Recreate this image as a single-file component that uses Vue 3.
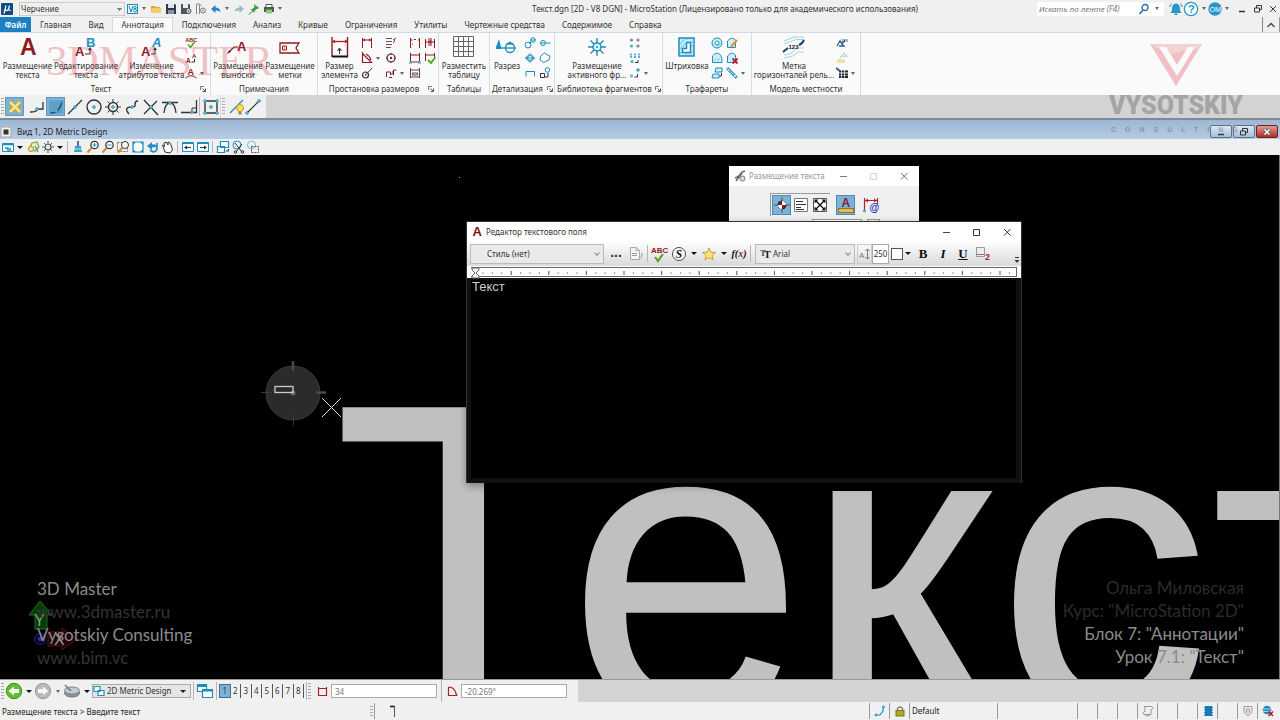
<script setup>
import { h, ref } from 'vue'

const R = '#8e1b22'
const B = '#1c8dbd'
const K = '#333'
const line = (d, c = K, w = 1, f = 'none') =>
  `<path d="${d}" fill="${f}" stroke="${c}" stroke-width="${w}"/>`
const node = (x, y, r = 1.3) =>
  `<circle cx="${x}" cy="${y}" r="${r}" fill="#bfe6f7" stroke="${B}" stroke-width="1"/>`
const fill = (d, c) => `<path d="${d}" fill="${c}"/>`
const letter = (t, x, y, s, c, extra = '') =>
  `<text x="${x}" y="${y}" font-size="${s}" fill="${c}" font-family="Liberation Sans, sans-serif" ${extra}>${t}</text>`

// name: [width, height, drawing]
const icons = {
  mu: [12, 12, `<rect width="12" height="12" rx="1" fill="#0f4c81"/>` + line('M3 10.500L5 2.500M4.500 5.500Q4 8 6 7.500Q7.500 7 8.500 2.500M8 6Q7.500 8 9.500 7', '#fff', 1.2)],
  v8: [12, 12, `<rect x=".5" y="1.500" width="10" height="9" fill="#eaf7fc" stroke="${B}"/>` + line('M2 3l2 6l2 -6', B) + `<circle cx="8" cy="4.500" r="1.200" fill="none" stroke="${B}"/><circle cx="8" cy="7.500" r="1.500" fill="none" stroke="${B}"/>`],
  folder: [12, 12, fill('M1 3h4l1 1h4v6H1z', '#d9a93f') + fill('M1.500 5h10l-1 5H1z', '#f2ca66')],
  save: [12, 12, fill('M1 1h9l1 1v9H1z', '#333b46') + fill('M3 1h6v4H3z', '#dfe4ea') + fill('M3 7h6v4H3z', '#8a94a0')],
  savegear: [12, 12, fill('M1 1h8l1 1v9H1z', '#4c5560') + fill('M3 1h5v4H3z', '#eee') + `<circle cx="8.500" cy="8" r="2.500" fill="#ddd" stroke="#555"/><circle cx="8.500" cy="8" r=".8" fill="#555"/>`],
  docgear: [12, 12, line('M1.500 1v10M4.500 1v10M1.500 1h3l2 2', '#888') + `<circle cx="8" cy="7.500" r="2.500" fill="#eee" stroke="#777"/><circle cx="8" cy="7.500" r=".8" fill="#777"/>`],
  undo: [12, 12, fill('M1 6L5.500 2v2.500Q10 4.500 10.500 9Q8.500 7 5.500 7.500V10z', '#2483c5')],
  redo: [12, 12, fill('M11 6L6.500 2v2.500Q2 4.500 1.500 9Q3.500 7 6.500 7.500V10z', '#9fb9cb')],
  pin: [12, 12, fill('M6 1l5 4l-1.500 1l-1 0l-2 2v2L2.500 6h2l2-2z', '#3b9a3f') + line('M4.500 8L1 11.500', '#277a2c')],
  print: [12, 12, fill('M3 1h6v3H3z', '#fff') + line('M3 4V1.500h6V4', '#555') + fill('M1 4h10v5H1z', '#4f5a50') + fill('M3 6.500h6v4H3z', '#7ed36a')],
  search: [12, 12, `<circle cx="7" cy="4.500" r="3" fill="none" stroke="#1f6fb2" stroke-width="1.300"/>` + line('M5 7L1.500 11', '#1f6fb2', 1.6)],
  bell: [14, 14, fill('M7 1.500q4 .5 3.800 4.500q0 3 1.700 5h-11q1.700-2 1.700-5Q3 2 7 1.500zM5.500 11.500h3v1.500h-3z', '#2697c8') + line('M1 5q0-2 1.500-3.500M13 5q0-2-1.500-3.500', '#2697c8')],
  help: [16, 16, `<circle cx="8" cy="8" r="6.700" fill="#fff" stroke="#2697c8" stroke-width="1.200"/>` + letter('?', 5, 12, 11, '#2697c8', 'font-weight="bold"')],
  user: [14, 14, `<circle cx="7" cy="7" r="6.700" fill="#2697c8"/>` + letter('OM', 1.5, 9.600, 7, '#fff')],
  min: [10, 10, line('M2 7.500h6', '#333', 1.5)],
  restore: [10, 10, line('M1.500 4h5v4h-5zM3.500 4V1.500h5v4h-2', '#333')],
  close: [10, 10, line('M2 2l6 6M8 2l-6 6', '#333')],
  wclose: [10, 10, line('M2.500 2.500l5 5M7.500 2.500l-5 5', '#555', 3) + line('M2.500 2.500l5 5M7.500 2.500l-5 5', '#fff', 1.6)],
  thinmin: [10, 10, line('M1 5.500h7', '#444')],
  thinmax: [10, 10, line('M1.500 2.500h6v6h-6z', '#333')],
  thinclose: [10, 10, line('M2 2l6.500 6.500M8.500 2l-6.500 6.500', '#333')],
  up: [10, 8, line('M1.500 6L5 2.500L8.500 6', '#444', 1.3)],
  launch: [6, 6, line('M.5 4V.5H4', '#777') + line('M2.500 2.500l2.500 2.500M5.500 2.500v3h-3', '#555')],

  bigA: [24, 24, letter('A', 4, 20, 23, R, 'font-weight="bold"')],
  editAB: [24, 24, letter('A', 1, 21, 13, R, 'font-weight="bold"') + letter('B', 12, 12, 13, '#2391c7', 'font-weight="bold"') + line('M11 19h5v-5', K) + fill('M14 15l2-3l2 3z', K)],
  attrA: [24, 24, letter('A', 1, 21, 13, R, 'font-weight="bold"') + letter('A', 12, 12, 13, '#2391c7', 'font-weight="bold" font-style="italic"') + line('M11 19h4v-5', K) + fill('M13 15l2-3l2 3z', K)],
  abc: [12, 12, letter('ABC', .2, 5, 5.5, R, 'font-weight="bold"') + line('M3 7.500l2.500 3L9.500 5', '#4aa51d', 1.5)],
  aa: [12, 12, letter('A', 1, 11, 6.5, R, 'font-weight="bold"') + letter('A', 7, 5.500, 6, R, 'font-weight="bold"') + line('M6.500 10h3V7', K)],
  aarc: [12, 12, letter('A', 2.5, 8, 9, R, 'font-weight="bold"') + line('M.5 11Q6 6.500 11.500 11', R)],
  note: [24, 24, letter('A', 11, 16, 13, R, 'font-weight="bold"') + line('M3 17l5-5h4', K, 1.2) + fill('M1 19l2-4l2 2z', R)],
  tag: [24, 24, line('M2 8h19l-3 5l3 5H2z', R, 1.3) + line('M4.500 11h4v4h-4z', R) + `<circle cx="6.500" cy="13" r=".7" fill="${R}"/>`],
  bigdim: [22, 24, line('M3 2v20M18.500 2v20', R, 1.4) + line('M3 6.500h16', '#b5212b', 1.3) + fill('M3 6.500l3-2v4zM19 6.500l-3-2v4z', '#b5212b') + line('M3 21.500h16', '#111', 2) + line('M10.500 19v-5M8.500 16l2-3l2 3', K)],
  dim: [12, 12, line('M1.500 1v10M10.500 1v10M1.500 3h9', R) + fill('M2 3l2-1.500v3zM10 3L8 1.500v3z', R)],
  dimang: [12, 12, line('M1.500 0v10.500h10M1.500 1.500l9 9M5 2q4 2 5 6', R, 1.2)],
  dimrad: [12, 12, `<circle cx="4.500" cy="8" r="3" fill="none" stroke="${K}" stroke-width="1.200"/>` + line('M4.500 8L11 1', R) + `<circle cx="4.500" cy="8" r=".8" fill="${R}"/>`],
  dimord: [12, 12, line('M1 1.500h6M1 4.500h6M1 7.500h6M1 10.500h5M9 2q2 2-1 4M11 1l-3 2', '#7a4a4d')],
  dimctr: [12, 12, `<circle cx="6" cy="6" r="4" fill="none" stroke="${K}" stroke-width="1.200"/><circle cx="6" cy="6" r="1.200" fill="${R}"/>` + line('M6 1v2M6 9v2M1 6h2M9 6h2', R)],
  dimchain: [12, 12, line('M1.500 10V5h4v3M5.500 7h3M8.500 8V3h3', R) + fill('M7 5l2-2v4zM4 10h3v1H4z', K)],
  dimtext: [12, 12, line('M1.500 1v10M10.500 1v10M1.500 3h2M9 3h2M5 2.500h2M3 7h1', R)],
  dimpair: [12, 12, line('M1.500 2v9M10.500 2v9M1.500 5h9M5 1v8M7 1v8', R) + fill('M5 5l2-2v4z', R)],
  dimbox: [12, 12, line('M1.500 1v9M10.500 1v9M1.500 3h9M1.500 10h9', R) + node(1.5, 10.500, 1) + node(10.500, 10.500, 1)],
  dimok: [12, 12, line('M1.500 1v8M10.500 1v4M1.500 3h9', R) + line('M4 8l3 3l4.500-6', '#4aa51d', 1.8)],
  dimstack: [12, 12, line('M1.500 1v10M10.500 1v10M1.500 3h9M3.500 6h5v2h-5zM1.500 10h9', '#62474a')],
  table: [24, 24, line('M1.500 1.500h20v20h-20zM6.500 1.500v20M11.500 1.500v20M16.500 1.500v20M1.500 6.500h20M1.500 11.500h20M1.500 16.500h20', '#666')],
  section: [22, 24, fill('M0 14V12l3-8l2 8v2z', B) + line('M0 13h20', B, 1.4) + `<circle cx="14" cy="13" r="4.500" fill="none" stroke="${B}" stroke-width="1.300"/>` + fill('M9 9.500l5-3l5 3z', B)],
  det1: [12, 12, `<circle cx="4" cy="8" r="3" fill="none" stroke="${B}"/><circle cx="9" cy="3" r="2.300" fill="none" stroke="${B}"/>` + line('M5 7l3-3M6.500 3h5', B)],
  det2: [12, 12, `<circle cx="4" cy="6" r="2.500" fill="none" stroke="${B}"/>` + line('M6.500 6h5M2 6h4', B)],
  det3: [12, 12, line('M6 1.500L10.500 6L6 10.500L1.500 6zM1 6h10', B) + `<circle cx="6" cy="6" r="2.500" fill="none" stroke="${B}"/>`],
  det4: [12, 12, line('M3 3q3-4 5 0q4 0 2.500 3q0 3-3 3q-3 3-5 0q-3-1-1-3q-1-2 1.500-3z', B)],
  det5: [12, 12, line('M2 9.500V4.500h8.500v5', B)],
  det6: [12, 12, line('M1.500 6.500h4v4h-4z', K) + `<circle cx="8.500" cy="3" r="2.300" fill="none" stroke="${B}"/>` + line('M6 10h3V6', K)],
  cell: [24, 24, `<circle cx="12" cy="12" r="4" fill="#e4f6fd" stroke="${B}" stroke-width="1.500"/><circle cx="12" cy="12" r="1" fill="${B}"/>` + line('M12 3v5M12 16v5M3 12h5M16 12h5M5.500 5.500l3.500 3.500M15 15L18.500 18.500M18.500 5.500l-3.500 3.500M5.500 18.500l3.500-3.500', B, 1.4)],
  cells1: [12, 12, `<circle cx="2.500" cy="3" r="1.600" fill="#888"/><circle cx="9" cy="3" r="1.600" fill="#888"/><circle cx="2.500" cy="9" r="1.600" fill="#5ab"/><circle cx="9" cy="9" r="1.600" fill="#888"/>`],
  cells2: [12, 12, line('M1 2.500h2M5 2.500h2M9 2.500h2M1 5h2M5 5h2M9 5h2', '#5ab4d6', 2) + `<circle cx="3" cy="9.500" r="1.500" fill="#5ab"/>` + line('M6 10.500h3V8', K)],
  cells3: [12, 12, `<circle cx="9" cy="3" r="1.700" fill="#3b9fc6"/><circle cx="2.500" cy="9" r="1.700" fill="#7bc"/>` + line('M5.500 10h3V7', K)],
  hatch: [22, 24, `<rect x="3" y="3" width="15" height="18" fill="#bfeaf7" stroke="${B}" stroke-width="1.500"/>` + line('M4 9l5-5M4 14l5-5M4 19l4-4M13 20l5-5M15 8l3-3M9 20l3-3M14 13l4-4M10 5l1-1', '#6cc3e0') + line('M10.500 7.500h4v10h-8v-4h4z', B, 1.5, '#fff')],
  h1: [12, 12, `<circle cx="6" cy="6" r="5" fill="#cdeef8" stroke="${B}"/><circle cx="6" cy="6" r="2" fill="#fff" stroke="${B}"/>` + line('M2 8l3-4M6 10l4-4', '#8bcbe2')],
  h2: [12, 12, line('M1.500 10.500V4q4-5 8-1v7.500z', B, 1, '#cdeef8') + line('M5 10l6-7', '#e8932b', 2.4)],
  h3: [12, 12, line('M1.500 10.500V4q4-5 8-1l1.500 4v3.500z', B, 1, '#cdeef8') + line('M3 9l3-3M6 9l3-3', '#8bcbe2')],
  h4: [12, 12, line('M1.500 10.500V4q4-5 8-1v7.500z', B, 1, '#cdeef8') + line('M6.500 6.500l5 5M11.500 6.500l-5 5', '#bd2029', 2)],
  h5: [12, 12, line('M5 1h6v4H4zM2 7h6v4H1z', B, 1, '#cdeef8') + line('M8.500 9h2V6', K)],
  h6: [12, 12, line('M1 1l10 10', B, 3) + line('M1 1l10 10M3 2L2 4M10 8L8 10', '#bce5f3')],
  contour: [24, 24, line('M2 6l10-4h10M2 9l8-3l4-1.500h8M2 20l8-2l4-5h8M2 23l9-2l5-4h6', '#a3d5e8') + line('M1 17l5-4M17 10q3-1 5-5', '#173f72', 2) + letter('123', 6.500, 14, 6, '#111', 'font-weight="bold"')],
  m1: [12, 12, line('M1 9l3-5l2 3l3-4M3 9h5l-3-3', '#235f9b', 1.3) + letter('123', 5, 5, 4, '#111')],
  m2: [12, 12, fill('M1 7h8v4H1z', '#f0dfa6') + line('M4 6q2-4 5-1M7 1q3 1 4 4', '#86bad6')],
  m3: [12, 12, line('M3 4.500h9M3 7.500h9M3 10h9', '#222', 2, 'none') + line('M0 1l4 3', '#235fbb', 2) + line('M5.500 3v9M8.500 3v9', '#fff', .7)],

  snapx: [18, 18, line('M4 4l10 10M14 4L4 14', '#c9952a', 4.5) + line('M4 4l10 10M14 4L4 14', '#ffe47a', 2.8)],
  s1: [18, 18, line('M2 14q7 0 8-3h5V4', K, 1.3) + node(9, 11)],
  s2: [18, 18, line('M3 2v14M5 2v14M7 2v14M9 2v14M11 2v14M13 2v14M15 2v14M2 4h14M2 6h14M2 8h14M2 10h14M2 12h14M2 14h14', '#4a90bb', .6) + line('M3 15q9 1 12-11', '#26445c', 1.2) + node(9, 13) + node(15, 4, 1)],
  s3: [18, 18, line('M2 16L16 2', K, 1.3) + node(9, 9)],
  s4: [18, 18, `<circle cx="9" cy="9" r="7" fill="none" stroke="${K}" stroke-width="1.400"/>` + node(9, 9)],
  s5: [18, 18, `<circle cx="9" cy="9" r="4.500" fill="none" stroke="${K}" stroke-width="1.500"/>` + line('M9 1v3M9 14v3M1 9h3M14 9h3M3.500 3.500l2 2M12.500 12.500l2 2M14.500 3.500l-2 2M3.500 14.500l2-2', K) + node(9, 9)],
  s6: [18, 18, line('M6 16Q0 9 9 9q4 0 3-3q0-3 3-3', K, 1.4) + node(9, 9)],
  s7: [18, 18, line('M2 2l14 15M15 3L2 16', K, 1.3) + node(9, 9)],
  s8: [18, 18, line('M1 4.500h16M3 15Q4 5 9 5t6 10', K, 1.3) + node(9, 5)],
  s9: [18, 18, line('M1 14.500h15.500V2', K, 1.3) + line('M12 14v-4h4', K) + node(12, 14)],
  s10: [18, 18, line('M3 3h12v12H3z', K, 1.4) + node(3, 3) + node(15, 3) + node(3, 15) + node(15, 15) + node(9, 9)],
  bulb: [18, 18, line('M2 15L15 2', B, 1.2) + `<circle cx="12" cy="10" r="3.500" fill="#ffe06a" stroke="#c99a1b"/>` + fill('M10.500 13.500h3v3h-3z', '#a88526')],
  seg: [18, 18, line('M3 15L15 3', K, 1.2) + node(3, 15) + node(15, 3)],

  winicon: [12, 12, `<rect x="1" y="1" width="10" height="10" fill="#eee" stroke="#aaa"/><rect x="3.500" y="3.500" width="5" height="5" fill="#333"/>`],
  v1: [14, 14, line('M1.500 3.500h11v8h-11z', B, 1, '#fff') + line('M1.500 4.500h11M4 8h3v4M9 8v4', B, 1.5)],
  v2: [14, 14, line('M3 9l3-6l5-1l2 5l-4 4z', '#77a644', 1.2, '#e5f0c5') + `<circle cx="5" cy="9" r="2.700" fill="#f2dd8e" stroke="#b9962f"/>` + line('M9 6l3 6', '#58b', 1.3)],
  v3: [14, 14, `<circle cx="7" cy="7" r="3" fill="#dde9ee" stroke="#444" stroke-width="1.200"/>` + line('M7 1v2M7 11v2M1 7h2M11 7h2M3 3l1.500 1.500M9.500 9.500l1.500 1.500M11 3l-1.500 1.500M3 11l1.500-1.500', '#555')],
  brush: [14, 14, line('M7 1v6', '#3777a2', 2) + fill('M4 6h6l1 6H3z', '#3aa0c9') + line('M3 9h8', '#fff', .7)],
  zin: [14, 14, `<circle cx="8.500" cy="5" r="3.700" fill="#fff" stroke="${K}" stroke-width="1.200"/>` + line('M8.500 3v4M6.500 5h4', B) + line('M5.500 8L1.500 12.500', '#d58928', 2)],
  zout: [14, 14, `<circle cx="8.500" cy="5" r="3.700" fill="#fff" stroke="${K}" stroke-width="1.200"/>` + line('M6.500 5h4', B) + line('M5.500 8L1.500 12.500', '#d58928', 2)],
  zwin: [14, 14, '<path d="M1.500 2.500h10v9h-10z" fill="none" stroke="#777" stroke-dasharray="2 1"/>' + `<circle cx="9" cy="5" r="3.500" fill="#fff" stroke="${K}"/>` + line('M6.500 7.500L2 12.500', '#d58928', 2)],
  fit: [14, 14, line('M2 2h10v10H2z', B, 1.2, '#fff') + fill('M2 2h3l-3 3zM12 2v3l-3-3zM2 12V9l3 3zM12 12H9l3-3z', B)],
  rot: [14, 14, fill('M1 6l5-4v2.500q4-1 5 3q-2-1-5 0v2.500z', '#258fc2') + line('M4 10q5 4 7-1V3', '#258fc2', 1.7)],
  pan: [14, 14, line('M4 12L1.500 5l2 1.500L3 3l2-1l2 3l0-3l2 1l1 2l1.500 5l-2.500 3z', K, 1, '#fff')],
  prev: [14, 14, line('M1.500 2.500h11v9h-11z', B, 1, '#fff') + line('M2 3.500h10', B) + line('M4 7.500h6', K) + fill('M3 7.500l3-2v4z', '#135')],
  next: [14, 14, line('M1.500 2.500h11v9h-11z', B, 1, '#fff') + line('M2 3.500h10', B) + line('M4 7.500h6', K) + fill('M11 7.500l-3-2v4z', '#135')],
  copyv: [14, 14, line('M4.500 1.500h8v6h-8zM1.500 6.500h7v6h-7z', B, 1.2, '#fff') + line('M10 11h2.500V9', K)],
  clip1: [14, 14, `<circle cx="6" cy="5" r="4" fill="#e5f5fb" stroke="${B}"/>` + line('M4 3l7 9M11 4L5 12', K) + `<circle cx="4.500" cy="12" r="1.300" fill="none" stroke="${K}"/><circle cx="11.500" cy="12" r="1.300" fill="none" stroke="${K}"/>`],
  clip2: [14, 14, `<circle cx="5.500" cy="5" r="4" fill="#e5f5fb" stroke="#79b9d3"/>` + '<path d="M5.500 6.500h7v6h-7z" fill="none" stroke="#555" stroke-dasharray="2 1"/>'],

  wrench: [12, 12, line('M2 11L8 3M1 8q4-1 7-6l3-1', '#666', 1.5) + `<circle cx="8.500" cy="8.500" r="2.500" fill="#ddd" stroke="#777"/>`],
  target: [18, 18, line('M9 1v16M1 9h16', '#555') + `<circle cx="9" cy="9" r="4" fill="#8e1b22" stroke="#222"/>` + fill('M9 9V5a4 4 0 0 1 4 4zM9 9v4a4 4 0 0 1-4-4z', '#fff')],
  just: [18, 18, line('M2.500 2.500h13v13h-13z', '#777', 1, '#fff') + line('M4 5.500h7M4 8.500h10M4 11.500h5M4 13.500h8', K)],
  expand: [18, 18, line('M2.500 2.500h13v13h-13z', '#555', 1, '#fff') + line('M5 5l8 8M13 5l-8 8', '#111', 1.4) + fill('M3.500 3.500h4l-4 4zM14.500 3.500v4l-4-4zM3.500 14.500v-4l4 4zM14.500 14.500h-4l4-4z', '#111')],
  aruler: [18, 18, letter('A', 4.500, 11, 12, R, 'font-weight="bold"') + `<rect x="1.500" y="12.500" width="15" height="4" fill="#e3bd57" stroke="#92742b"/>`],
  dimat: [18, 18, line('M2.500 2v14M15.500 2v6M2.500 4.500h13', '#b5212b', 1.2) + fill('M3 4.500l3-2v4zM15 4.500l-3-2v4z', '#b5212b') + node(2.500, 15, 1) + letter('@', 7.500, 15, 10, '#2228b5', 'font-weight="bold"')],
  A: [12, 14, letter('A', 1.5, 11, 13, '#7d1219', 'font-weight="bold"')],
  paste: [16, 16, line('M2.500 1.500h6l3 3v9h-9zM8 1.500v3h3', '#aaa', 1, '#f4f4f4') + line('M4 7.500h5M4 9.500h5M11 13q4-2 3-6', '#999')],
  spell: [18, 18, letter('ABC', 1, 8, 8, '#8e1b22', 'font-weight="bold"') + line('M5 12l3 4l5-7', '#4ba31c', 2)],
  sym: [16, 16, `<circle cx="8" cy="8" r="6.500" fill="#fff" stroke="#444"/>` + `<text x="4.500" y="12" font-family="Liberation Serif, serif" font-size="12" font-weight="bold" font-style="italic" fill="#111">S</text>`],
  star: [16, 16, line('M8 2l1.800 4.200l4.700.3l-3.500 3l1 4.500L8 11.500L4 14l1-4.500l-3.500-3l4.700-.3z', '#d29a2e', 1, '#ffe486')],
  tt: [12, 12, '<text x="0" y="8" font-family="Liberation Serif, serif" font-size="9" font-weight="bold" fill="#555">T</text><text x="4" y="10" font-family="Liberation Serif, serif" font-size="10" font-weight="bold" fill="#111">T</text>'],
  asize: [12, 14, letter('A', 0, 10.500, 8, '#777') + line('M8.500 2v10M6.500 4l2-2l2 2M6.500 10l2 2l2-2', '#777')],
  sub2: [18, 18, '<path d="M2.500 2.500h8v9h-8z" fill="#eee" stroke="#999"/>' + line('M3 9.500h7', '#777') + letter('2', 11, 15, 9, '#a5212b', 'font-weight="bold"')],
  more: [6, 8, line('M1 1.500h4', K) + fill('M.5 4h5L3 7z', K)],

  back: [18, 18, `<circle cx="9" cy="9" r="7.700" fill="#5fbf2d" stroke="#3f8f1b"/>` + fill('M3.500 9L9 4.500v2.500h5v4H9v2.500z', '#fff')],
  fwd: [18, 18, `<circle cx="9" cy="9" r="7.700" fill="#b9b9b9" stroke="#999"/>` + fill('M14.500 9L9 4.500v2.500H4v4h5v2.500z', '#f5f5f5')],
  disk: [18, 18, `<ellipse cx="9" cy="11" rx="7.500" ry="4" fill="#8b959b" stroke="#6d777c"/><ellipse cx="9" cy="8.500" rx="7.500" ry="3.500" fill="#c3cacd" stroke="#7b858a"/>` + line('M2 3l6 6', '#777', 1.5)],
  models: [12, 12, line('M1 1.500h6v5H1zM5 5.500h6v5H5z', B, 1.2, '#fff')],
  views: [18, 18, line('M1.500 2.500h9v7h-9z', B, 1.2, '#fff') + line('M1.500 4h9', B, 2) + line('M6.500 7.500h10v8h-10z', B, 1.2, '#fff') + line('M6.500 8.500h10', B, 2)],
  dist: [12, 12, line('M1.500 2v9M9.500 2v9M1.500 3.500h8M1.500 10.500h8', '#a5242e', 1.2)],
  angle: [12, 12, line('M1.500 2v8.500h9M1.500 2l3 .5q4 2 5 8', '#a5242e', 1.2)],
  tick: [8, 14, line('M1 2.500h5', '#111', 1.5) + line('M5.500 2v11', '#555')],
  spark: [12, 12, line('M2 10h4l3-4V2', B, 1.2) + node(2, 10, 1) + node(9.500, 2, 1)],
  lock: [12, 12, line('M3.500 6V3.500q2.500-3 5 0V6', '#777', 1.3) + `<rect x="2" y="5.500" width="8" height="5.500" fill="#b3a52d" stroke="#7c7219"/>`],
  scroll: [12, 12, line('M2 1.500h8q2 3-1 3v5H2q-2-3 1-3v-5', '#999') + line('M4 9.500q-2 2 4 1', '#999')],
  book: [12, 12, fill('M3 1h7v10H3z', '#1879b8') + line('M2 2.500h2M2 5h2M2 7.500h2M2 10h2M9 2.500h2M9 5h2M9 7.500h2M9 10h2', '#1879b8')],
  shield: [12, 12, line('M2 1.500h8v5q-1 3-4 4q-3-1-4-4z', '#999') + `<circle cx="6" cy="5.500" r="1.800" fill="none" stroke="#888"/>`],
  globe: [12, 12, `<circle cx="5" cy="5" r="4.300" fill="#1d8abb"/>` + line('M1 4h8M1 6.500h8', '#cdeaf5', .8) + line('M6.500 6.500l4.500 4.500M11 6.500L6.500 11', '#c01f28', 1.7)],
}

const Icon = (props) => {
  const [w, hgt, body] = icons[props.n]
  return h('svg', { width: w, height: hgt, viewBox: `0 0 ${w} ${hgt}`, 'aria-hidden': 'true', innerHTML: body })
}
Icon.props = ['n']

const tabs = ['Файл', 'Главная', 'Вид', 'Аннотация', 'Подключения', 'Анализ', 'Кривые', 'Ограничения', 'Утилиты', 'Чертежные средства', 'Содержимое', 'Справка']
const groups = [
  { id: 'text', name: 'Текст', launch: true, big: [['bigA', 'Размещение', 'текста'], ['editAB', 'Редактирование', 'текста'], ['attrA', 'Изменение', 'атрибутов текста']], small: [['abc', 'aa', 'aarc+']] },
  { id: 'notes', name: 'Примечания', big: [['note', 'Размещение', 'выноски'], ['tag', 'Размещение', 'метки']], small: [] },
  { id: 'dims', name: 'Простановка размеров', launch: true, big: [['bigdim', 'Размер', 'элемента']], small: [['dim', 'dimang+', 'dimrad'], ['dimord', 'dimctr', 'dimchain+'], ['dimtext', 'dimbox', 'dimstack'], ['dimpair', 'dimok']] },
  { id: 'tables', name: 'Таблицы', big: [['table', 'Разместить', 'таблицу']], small: [] },
  { id: 'detail', name: 'Детализация', launch: true, big: [['section', 'Разрез', '']], small: [['det1', 'det3', 'det5'], ['det2', 'det4', 'det6']] },
  { id: 'cells', name: 'Библиотека фрагментов', launch: true, big: [['cell', 'Размещение', 'активного фр...']], small: [['cells1', 'cells2', 'cells3+']] },
  { id: 'patterns', name: 'Трафареты', big: [['hatch', 'Штриховка', '']], small: [['h1', 'h3', 'h5'], ['h2', 'h4', 'h6+']] },
  { id: 'terrain', name: 'Модель местности', big: [['contour', 'Метка', 'горизонталей рель...']], small: [['m1', 'm2', 'm3+']] },
]
const quick = ['v8', '+', 'folder', 'save', 'savegear', 'docgear', 'undo', '+', 'redo', 'pin', 'print', '+']
const snaps = ['s1', 's2', 's3', 's4', 's5', 's6', 's7', 's8', 's9']
const viewTools = ['v1', '+', 'v2', 'v3', '+', '|', 'brush', 'zin', 'zout', 'zwin', 'fit', 'rot', 'pan', '|', 'prev', 'next', '|', 'copyv', 'clip1', 'clip2']
const statusCells = ['', '', '', 'scroll', '', '', 'book', '', 'shield', 'globe']
const ticks = Array.from({ length: 57 }, (_, i) => ({ x: 12 + i * 9.4, major: i % 4 === 3 }))
// Placement of every character of the text element on the sheet.
const glyphs = [
  { c: 'Т', x: 334, y: 545 },
  { c: 'е', x: 568, y: 561 },
  { c: 'к', x: 805, y: 561 },
  { c: 'с', x: 997, y: 561 },
  { c: 'т', x: 1211, y: 561 },
]
const content = ref('Текст')
const size = ref('250')
const distance = ref('34')
const angle = ref('-20.269°')
</script>

<template>
  <div class="app">
    <header class="titlebar">
      <Icon n="mu" />
      <select class="workflow" aria-label="Рабочий процесс"><option>Черчение</option></select>
      <div class="quick">
        <template v-for="(q, i) in quick" :key="i">
          <button v-if="q === '+'" class="caret" aria-label="Ещё"></button>
          <button v-else class="qbtn" :aria-label="q"><Icon :n="q" /></button>
        </template>
      </div>
      <h1>Текст.dgn [2D - V8 DGN] - MicroStation (Лицензировано только для академического использования)</h1>
      <div class="search">
        <input type="text" placeholder="Искать по ленте (F4)" aria-label="Искать по ленте">
        <Icon n="search" /><button class="caret" aria-label="Параметры поиска"></button>
      </div>
      <div class="account">
        <button aria-label="Уведомления"><Icon n="bell" /></button>
        <button aria-label="Помощь"><Icon n="help" /></button>
        <button class="caret" aria-label="Меню помощи"></button>
        <button aria-label="Пользователь"><Icon n="user" /></button>
        <button class="caret" aria-label="Меню пользователя"></button>
      </div>
      <div class="winbtns">
        <button aria-label="Свернуть"><Icon n="min" /></button>
        <button aria-label="Восстановить"><Icon n="restore" /></button>
        <button aria-label="Закрыть"><Icon n="close" /></button>
      </div>
    </header>

    <nav class="tabs">
      <button v-for="t in tabs" :key="t" :class="{ file: t === 'Файл', active: t === 'Аннотация' }">{{ t }}</button>
      <button class="collapse" aria-label="Свернуть ленту"><Icon n="up" /></button>
    </nav>

    <section class="ribbon">
      <div v-for="g in groups" :key="g.id" class="group" :class="g.id">
        <div class="tools">
          <button v-for="b in g.big" :key="b[0]" class="big">
            <Icon :n="b[0]" /><span>{{ b[1] }}</span><span>{{ b[2] }}</span>
          </button>
          <div v-for="(col, ci) in g.small" :key="ci" class="col">
            <div v-for="s in col" :key="s" class="cellrow">
              <button class="sm" :aria-label="s"><Icon :n="s.replace('+', '')" /></button>
              <button v-if="s.endsWith('+')" class="caret" aria-label="Ещё"></button>
            </div>
          </div>
        </div>
        <div class="gname"><span>{{ g.name }}</span><button v-if="g.launch" aria-label="Параметры группы"><Icon n="launch" /></button></div>
      </div>
      <div class="wm-left">3DMASTER</div>
      <div class="wm-right">
        <svg width="54" height="44" viewBox="0 0 54 44" aria-hidden="true">
          <path d="M1 1H53L27 43Z" fill="#efc1c5" />
          <path d="M1 1H53L50 6Q30 6 19 14L9 5Z" fill="#f3d3d2" />
          <path d="M10 4H17L28 22L39 4H46L28 33Z" fill="#fafafa" />
        </svg>
        <strong>VYSOTSKIY</strong>
        <span>CONSULTING</span>
      </div>
    </section>

    <div class="snapbar">
      <div class="panel">
        <i class="grip"></i>
        <button class="snap on" aria-label="Отмена привязки"><Icon n="snapx" /></button>
        <span class="gap"></span>
        <button v-for="s in snaps" :key="s" class="snap" :class="{ on: s === 's2' }" :aria-label="s"><Icon :n="s" /></button>
        <i class="rule"></i>
        <button class="snap" aria-label="Мультипривязка"><Icon n="s10" /></button>
      </div>
      <div class="panel second">
        <i class="grip"></i>
        <button class="snap" aria-label="Подсветка"><Icon n="bulb" /></button>
        <button class="snap" aria-label="Отрезок"><Icon n="seg" /></button>
      </div>
    </div>

    <div class="viewtitle">
      <Icon n="winicon" /><span>Вид 1, 2D Metric Design</span>
      <div class="mdi">
        <button aria-label="Свернуть вид"><Icon n="min" /></button>
        <button aria-label="Восстановить вид"><Icon n="restore" /></button>
        <button class="x" aria-label="Закрыть вид"><Icon n="wclose" /></button>
      </div>
    </div>
    <div class="viewtools">
      <template v-for="(v, i) in viewTools" :key="i">
        <button v-if="v === '+'" class="caret dark" aria-label="Ещё"></button>
        <i v-else-if="v === '|'" class="rule"></i>
        <button v-else class="vt" :aria-label="v"><Icon :n="v" /></button>
      </template>
    </div>

    <main class="canvas">
      <svg class="sheet" aria-label="Чертеж">
        <g class="huge">
          <text v-for="g in glyphs" :key="g.x" :x="g.x" :y="g.y">{{ g.c }}</text>
        </g>
        <circle cx="293" cy="238" r="27" fill="#2b2b2b" stroke="#3a3a3a" />
        <path d="M293 206v10M316 237.500h10" stroke="#4a4a4a" stroke-width="2.500" />
        <path d="M293.500 259v11M261 237.500h11" stroke="#3a3a3a" />
        <circle cx="293" cy="238" r="2.500" fill="#666" />
        <rect x="275" y="231.500" width="18" height="6" fill="none" stroke="#ccc" stroke-width="1.300" />
        <path d="M322 243l19 19M341 243l-19 19" stroke="#ddd" />
        <rect x="459" y="22" width="1" height="1" fill="#999" />
        <path d="M40 446l12 14h-5v14h-12v-14h-6z" fill="#063b0a" stroke="#176f1d" />
        <text class="axis" x="34" y="471">Y</text>
        <path d="M48 477h14v-4l15 11l-15 11v-4H48z" fill="#1d0305" stroke="#5d1015" />
        <text class="axis dim" x="54" y="490">X</text>
        <circle cx="40" cy="484" r="5.500" fill="#08082c" stroke="#1c1c7c" />
        <circle cx="40" cy="484" r="2" fill="#3030b0" />
      </svg>
      <div class="credits left">
        <p>3D Master</p><p class="faint">www.3dmaster.ru</p><p>Vysotskiy Consulting</p><p class="faint">www.bim.vc</p>
      </div>
      <div class="credits right">
        <p class="faint">Ольга Миловская</p><p class="faint">Курс: "MicroStation 2D"</p><p>Блок 7: "Аннотации"</p><p>Урок 7.1: "Текст"</p>
      </div>

      <section class="tooldlg">
        <header><Icon n="wrench" /><span>Размещение текста</span>
          <button aria-label="Свернуть"><Icon n="thinmin" /></button>
          <button class="off" aria-label="Развернуть"><Icon n="thinmax" /></button>
          <button aria-label="Закрыть"><Icon n="thinclose" /></button>
        </header>
        <div class="toolrow">
          <div class="set">
            <button class="on" aria-label="По точке"><Icon n="target" /></button>
            <button aria-label="Выравнивание"><Icon n="just" /></button>
            <button aria-label="По размеру"><Icon n="expand" /></button>
          </div>
          <button class="on" aria-label="Масштаб аннотаций"><Icon n="aruler" /></button>
          <button aria-label="Ассоциация"><Icon n="dimat" /></button>
        </div>
        <div class="fieldrow"><input type="text" aria-label="Угол"><button aria-label="Выбрать"></button></div>
      </section>

      <section class="editor">
        <header><Icon n="A" /><span>Редактор текстового поля</span>
          <button aria-label="Свернуть"><Icon n="thinmin" /></button>
          <button aria-label="Развернуть"><Icon n="thinmax" /></button>
          <button aria-label="Закрыть"><Icon n="thinclose" /></button>
        </header>
        <div class="edbar">
          <div class="combo style"><select aria-label="Стиль"><option>Стиль (нет)</option></select></div>
          <button class="dots" aria-label="Стили">...</button>
          <button aria-label="Вставить"><Icon n="paste" /></button>
          <i class="rule"></i>
          <button class="spell" aria-label="Орфография"><Icon n="spell" /></button>
          <button aria-label="Символ"><Icon n="sym" /></button><button class="caret dark" aria-label="Символы"></button>
          <button aria-label="Избранное"><Icon n="star" /></button><button class="caret dark" aria-label="Список избранного"></button>
          <button class="fx">f(<b>x</b>)</button>
          <i class="rule"></i>
          <div class="combo font"><Icon n="tt" /><select aria-label="Шрифт"><option>Arial</option></select></div>
          <span class="asize"><Icon n="asize" /></span>
          <input v-model="size" class="size" type="text" aria-label="Размер текста">
          <button class="swatch" aria-label="Цвет"></button><button class="caret dark" aria-label="Цвета"></button>
          <button class="fmt b">B</button><button class="fmt i">I</button><button class="fmt u">U</button>
          <button aria-label="Индекс"><Icon n="sub2" /></button>
          <button class="overflow" aria-label="Ещё"><Icon n="more" /></button>
        </div>
        <div class="ruler">
          <svg width="100%" height="12" aria-hidden="true">
            <path v-for="t in ticks" :key="t.x" :d="t.major ? `M${t.x} 3v4` : `M${t.x} 4v2`" :stroke="t.major ? '#555' : '#999'" />
            <path d="M1 0h7v2L5 5l3 3v2H1V8l3-3L1 2z" fill="#f4f4f4" stroke="#666" />
          </svg>
        </div>
        <textarea v-model="content" aria-label="Текст" spellcheck="false"></textarea>
      </section>
    </main>

    <div class="bottombar">
      <div class="nav">
        <i class="grip"></i>
        <button aria-label="Назад"><Icon n="back" /></button><button class="caret dark" aria-label="История назад"></button>
        <button aria-label="Вперед"><Icon n="fwd" /></button><button class="caret" aria-label="История вперед"></button>
        <button aria-label="Модели"><Icon n="disk" /></button><button class="caret dark" aria-label="Список"></button>
        <div class="model"><Icon n="models" /><select aria-label="Модель"><option>2D Metric Design</option></select></div>
        <i class="rule"></i>
        <button aria-label="Группа видов"><Icon n="views" /></button>
        <i class="rule"></i>
        <div class="nums"><button v-for="n in 8" :key="n" :class="{ on: n === 1 }">{{ n }}</button></div>
        <i class="rule"></i>
      </div>
      <div class="accu"><i class="grip"></i><label><Icon n="dist" /><input v-model="distance" type="text" aria-label="Расстояние"></label><i class="rule"></i>
        <label><Icon n="angle" /><input v-model="angle" type="text" aria-label="Угол"></label></div>
    </div>

    <footer class="status">
      <span class="msg">Размещение текста &gt; Введите текст</span>
      <i class="grip"></i>
      <span class="glyph"><Icon n="tick" /></span>
      <span class="cell"><Icon n="spark" /></span>
      <span class="cell"><Icon n="lock" /></span>
      <span class="cell level">Default</span>
      <span v-for="(s, i) in statusCells" :key="i" class="cell"><Icon v-if="s" :n="s" /></span>
    </footer>
  </div>
</template>

<style>
body { overflow: hidden; }
</style>

<style scoped>
* { box-sizing: border-box; }
.app { position: relative; display: flex; flex-direction: column; height: 100vh; background: #f0f0f0; color: #333; font: 8px/10px "Noto Sans", "Open Sans", sans-serif; }
button { display: inline-flex; align-items: center; justify-content: center; flex: none; padding: 0; border: 0; background: none; color: inherit; font: inherit; }
select, input { font: inherit; color: inherit; min-width: 0; border-radius: 0; outline: 0; }
:deep(svg), svg { flex: none; display: block; }
select { appearance: none; border: 0; background: none; padding: 0; }
.caret { width: 9px; }
.caret::after { content: ""; border: 2px solid transparent; border-top: 3px solid #666; border-bottom: 0; }
.caret.dark::after { border-width: 3px 3px 0; border-top-color: #111; }
.rule { flex: none; width: 1px; align-self: stretch; margin: 2px; background: #b5b5b5; }
.grip { flex: none; width: 3px; margin: 3px 1px; align-self: stretch; background: repeating-linear-gradient(#aaa 0 1px, transparent 1px 3px); }

.titlebar { display: flex; align-items: center; height: 17px; padding-left: 1px; }
.workflow { width: 106px; height: 14px; margin-left: 6px; padding-left: 1px; border: 1px solid #ccc; background: linear-gradient(#888, #888) 97px 5px / 5px 1px no-repeat, linear-gradient(#888, #888) 98px 6px / 3px 1px no-repeat, linear-gradient(#888, #888) 99px 7px / 1px 1px no-repeat, #efefef; }
.quick { display: flex; width: 164px; }
.quick .caret { width: 8px; }
.qbtn { width: 15px; }
.titlebar h1 { flex: 1; margin: 0; padding-left: 124px; text-align: center; font: inherit; white-space: nowrap; }
.search { display: flex; align-items: center; width: 127px; height: 14px; background: #fff; }
.search input { flex: 1; border: 0; padding: 0 2px; background: none; font-style: italic; }
.search .caret { width: 14px; }
.account { display: flex; align-items: center; width: 72px; padding-left: 5px; }
.winbtns { display: flex; justify-content: space-between; width: 44px; padding: 0 2px 0 1px; }

.tabs { display: flex; height: 15px; border-right: 1px solid #999; }
.tabs button { padding: 0 8px 0 9px; }
.tabs .file { width: 31px; padding: 0; background: #1a7fc4; color: #fff; font-weight: 600; }
.tabs .active { background: #fafafa; border: 1px solid #d3dae0; border-bottom: 0; }
.tabs .collapse { margin-left: auto; padding: 0 3px; border-left: 1px solid #888; }

.ribbon { position: relative; display: flex; height: 63px; background: #fafafa; border-top: 1px solid #d3dae0; }
.group { flex: none; display: flex; flex-direction: column; height: 62px; border-right: 1px solid #d5dde3; }
.tools { display: flex; flex: 1; padding-top: 2px; }
.big { flex-direction: column; justify-content: flex-start; line-height: 9px; white-space: nowrap; }
.big span { height: 9px; }
.big :deep(svg) { margin-bottom: 2px; }
.col { display: flex; flex-direction: column; padding-top: 1px; gap: 1px; width: 15px; }
.cellrow { display: flex; height: 14px; }
.sm { width: 12px; }
.gname { position: relative; height: 13px; text-align: center; white-space: nowrap; line-height: 14px; }
.gname button { position: absolute; right: 4px; top: 4px; }
.text { width: 211px; } .text .tools { padding-left: 1px; } .text .big { width: 53px; } .text .big:nth-child(2) { width: 64px; } .text .big:nth-child(3) { width: 67px; }
.text .gname span, .dims .gname span { margin-right: 8px; }
.notes { width: 107px; } .notes .tools { padding-left: 1px; } .notes .big { width: 52px; }
.dims { width: 121px; } .dims .big { width: 43px; } .dims .col { width: 24px; } .dims .col:nth-child(4) { width: 15px; } .dims .col:nth-child(5) { width: 12px; }
.tables { width: 51px; } .tables .big { width: 50px; }
.detail { width: 65px; } .detail .big { width: 34px; } .detail .gname, .cells .gname { text-align: left; padding-left: 2px; }
.detail .gname button, .cells .gname button { right: 1px; }
.cells { width: 108px; } .cells .big { width: 74px; padding-left: 10px; }
.patterns { width: 89px; } .patterns .big { width: 48px; }
.terrain { width: 109px; } .terrain .big { width: 84px; }
.wm-left { position: absolute; left: 46px; top: 4px; color: #d2333f; opacity: .28; font: 43px/48px "Liberation Serif", serif; pointer-events: none; }
.wm-right { position: absolute; z-index: 2; right: 37px; top: 10px; width: 134px; display: flex; flex-direction: column; align-items: center; pointer-events: none; }
.wm-right strong { color: #999; opacity: .8; font: 900 25px/28px Roboto, sans-serif; margin-top: 5px; }
.wm-right span { align-self: stretch; padding: 0 2px; color: #778; opacity: .6; font: bold 7px/8px "Liberation Sans", sans-serif; letter-spacing: 9px; margin-top: 6px; }

.snapbar { display: flex; height: 23px; background: #d3d3d3; }
.panel { display: flex; align-items: center; background: #f0f0f0; height: 23px; }
.snap { width: 19px; height: 19px; }
.snap.on { background: #78b3dc; border: 1px solid #6696b8; }
.gap { width: 3px; }
.panel .rule { margin: 2px 1px; }
.second { width: 45px; margin-left: 1px; }
.second .snap { width: 16px; } .second .grip { margin-right: 4px; }

.viewtitle { display: flex; align-items: center; gap: 5px; height: 21px; padding-top: 4px; border-top: 2px solid #7e8a95; background: linear-gradient(#9db6d2, #b6cce3); color: #222; }
.mdi { display: flex; gap: 1px; margin-left: auto; padding-right: 2px; }
.mdi button { width: 22px; height: 13px; border: 1px solid #56708d; border-radius: 2px; background: linear-gradient(#dce8f4, #a8c0d9); }
.mdi .x { background: linear-gradient(#e09a90, #b52c24); border-color: #6b2320; }
.viewtools { display: flex; align-items: center; height: 16px; }
.vt { width: 15px; } .viewtools .caret { width: 10px; }

.canvas { position: relative; flex: 1; min-height: 0; overflow: hidden; background: #000; border-right: 1px solid #777; }
.sheet { position: absolute; inset: 0; width: 100%; height: 100%; }
.huge { font: 424px "Liberation Sans", Arial, sans-serif; fill: #c0c0c0; stroke: #c0c0c0; stroke-width: 2px; }
.axis { font: 16px "Liberation Sans", sans-serif; fill: #7aa57a; } .axis.dim { fill: #999; }
.credits { position: absolute; bottom: 10px; font: 17px/23px Lato, "Noto Sans", sans-serif; color: #8b8b8b; }
.credits p { margin: 0; } .credits .faint { color: #333; }
.credits.left { left: 37px; } .credits.right { right: 35px; bottom: 11px; text-align: right; }
.credits.right .faint { color: #2b2b2b; }

.tooldlg { position: absolute; left: 729px; top: 11px; width: 190px; height: 70px; background: #f0f0f0; }
.tooldlg header, .editor header { display: flex; align-items: center; height: 20px; background: #fff; }
.tooldlg header { padding: 0 2px 0 5px; gap: 3px; color: #999; }
.tooldlg header span { flex: 1; } .tooldlg header button { width: 27px; opacity: .7; } .tooldlg header .off { opacity: .2; }
.toolrow { display: flex; align-items: center; gap: 6px; margin: 7px 0 0 41px; }
.toolrow button { width: 19px; height: 20px; } .toolrow .on { background: #78b3dc; border: 1px solid #5688ad; }
.set { display: flex; border-top: 1px solid #999; border-left: 1px solid #999; padding: 1px; }
.fieldrow { display: flex; gap: 5px; margin: 3px 0 0 83px; } .fieldrow input { width: 50px; height: 14px; border: 1px solid #999; } .fieldrow button { width: 13px; border: 1px solid #999; }

.editor { position: absolute; left: 466px; top: 66px; width: 556px; height: 262px; display: flex; flex-direction: column; background: #111; border: 1px solid #333; border-bottom: 0; box-shadow: 0 3px 8px rgba(0, 0, 0, .35); }
.editor header { padding: 0 1px 0 4px; gap: 3px; color: #333; } .editor header span { flex: 1; } .editor header button { width: 27px; }
.edbar { display: flex; align-items: center; height: 24px; padding: 1px 0 2px 3px; background: linear-gradient(#fdfdfd, #d9d9d9); }
.edbar > button { width: 20px; } .edbar > .caret { width: 10px; } .edbar .rule { margin: 2px 1px; } .edbar .fx + .rule { margin-right: 4px; }
.combo { display: flex; align-items: center; height: 20px; border: 1px solid #bbb; background: #eaeaea; position: relative; }
.combo select { flex: 1; height: 100%; }
.combo::after { content: ""; position: absolute; right: 4px; top: 6px; width: 3px; height: 3px; border: solid #888; border-width: 0 1px 1px 0; transform: rotate(45deg); }
.style { width: 134px; padding-left: 16px; } .font { width: 100px; padding-left: 4px; gap: 1px; }
.dots { font: bold 14px/8px "Liberation Sans", sans-serif; padding-bottom: 3px; margin-left: 2px; }
.asize { width: 15px; height: 20px; display: flex; align-items: center; justify-content: center; border: 1px solid #ccc; margin-left: 2px; }
.size { width: 17px; height: 20px; padding: 0; border: 1px solid #aaa; text-align: center; }
.edbar > .swatch { width: 12px; height: 12px; margin-left: 2px; border: 1px solid #555; background: #fff; }
.edbar .fx { font: italic bold 10px/12px "Liberation Serif", serif; color: #111; } .fx b { color: #8e1b22; }
.fmt { font: bold 13px/14px "Liberation Serif", serif; color: #111; } .fmt.i { font-style: italic; } .fmt.u { text-decoration: underline; }
.edbar > .overflow { width: 8px; margin-left: auto; align-self: flex-end; }
.ruler { height: 12px; background: #fff; padding: 0 4px; }
.ruler svg { border: 1px solid #666; border-left: 0; height: 10px; margin-top: 1px; overflow: visible; }
textarea { flex: 1; margin: 2px 5px 5px 4px; padding: 0 1px; border: 0; outline: 0; resize: none; background: #000; color: #ccc; font: 13px/14px "Liberation Sans", Arial, sans-serif; }

.bottombar { display: flex; height: 23px; background: #d3d3d3; border-top: 1px solid #999; }
.nav, .accu { display: flex; align-items: center; background: #f0f0f0; }
.nav > button { width: 18px; } .nav > .caret { width: 11px; }
.model { display: flex; align-items: center; width: 99px; height: 14px; border: 1px solid #aaa; background: #e5e5e5; position: relative; }
.model select { flex: 1; margin-left: 2px; } .model::after { content: ""; position: absolute; right: 4px; top: 5px; border: 3px solid transparent; border-top-color: #222; border-bottom: 0; }
.nums { display: flex; width: 85px; } .nums button { flex: 1; height: 14px; border-right: 1px solid #555; } .nums .on { background: #78b3dc; border: 1px solid #47708f; }
.nav .rule:last-child { margin-right: 0; }
.accu { padding-right: 11px; } .accu label { display: flex; align-items: center; gap: 2px; } .accu input { width: 106px; height: 14px; border: 1px solid #aaa; background: #fff; padding: 0 3px; color: #777; } .accu .grip { margin-right: 6px; } .accu > .rule { margin: 0 5px 0 4px; }

.status { display: flex; align-items: stretch; height: 18px; line-height: 18px; color: #222; padding: 1px 3px 1px 0; }
.msg { width: 369px; padding-left: 2px; flex: none; } .glyph { flex: 1; padding: 1px 0 0 14px; border-left: 1px solid #999; }
.cell { flex: none; display: flex; align-items: center; justify-content: center; width: 20px; border-left: 1px solid #999; } .cell.level { width: 89px; justify-content: flex-start; padding-left: 2px; margin-right: 79px; border-right: 1px solid #999; }
</style>
